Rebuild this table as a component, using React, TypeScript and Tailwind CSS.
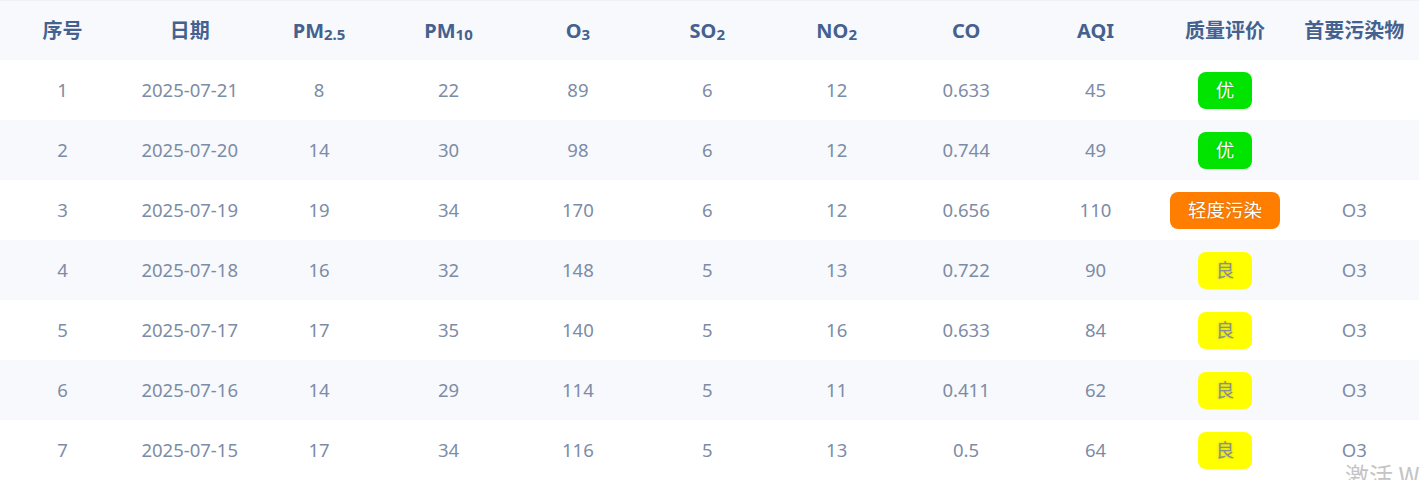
import React from "react";

interface Row {
  date: string;
  pm25: number;
  pm10: number;
  o3: number;
  so2: number;
  no2: number;
  co: string;
  aqi: number;
  level: string;
  main: string;
}

const rows: Row[] = [
  { date: "2025-07-21", pm25: 8, pm10: 22, o3: 89, so2: 6, no2: 12, co: "0.633", aqi: 45, level: "优", main: "" },
  { date: "2025-07-20", pm25: 14, pm10: 30, o3: 98, so2: 6, no2: 12, co: "0.744", aqi: 49, level: "优", main: "" },
  { date: "2025-07-19", pm25: 19, pm10: 34, o3: 170, so2: 6, no2: 12, co: "0.656", aqi: 110, level: "轻度污染", main: "O3" },
  { date: "2025-07-18", pm25: 16, pm10: 32, o3: 148, so2: 5, no2: 13, co: "0.722", aqi: 90, level: "良", main: "O3" },
  { date: "2025-07-17", pm25: 17, pm10: 35, o3: 140, so2: 5, no2: 16, co: "0.633", aqi: 84, level: "良", main: "O3" },
  { date: "2025-07-16", pm25: 14, pm10: 29, o3: 114, so2: 5, no2: 11, co: "0.411", aqi: 62, level: "良", main: "O3" },
  { date: "2025-07-15", pm25: 17, pm10: 34, o3: 116, so2: 5, no2: 13, co: "0.5", aqi: 64, level: "良", main: "O3" },
];

function Level({ level }: { level: string }) {
  if (level === "优")
    return <span className="inline-flex items-center justify-center h-[37px] px-[18px] rounded-lg bg-[#00e400] text-white [text-shadow:0_0_2px_rgba(0,0,0,0.25)]">优</span>;
  if (level === "良")
    return <span className="inline-flex items-center justify-center h-[37px] px-[18px] rounded-lg bg-[#ffff00] text-[#8a8f99] [text-shadow:0_0_3px_rgba(0,0,0,0.2)]">良</span>;
  return <span className="inline-flex items-center justify-center h-[37px] px-[18px] rounded-lg bg-[#ff7e00] text-white [text-shadow:0_0_2px_rgba(0,0,0,0.25)]">{level}</span>;
}

const cell = "flex items-center justify-center";
const sub = "text-[15px] align-[-5px] leading-none";
const cols = "grid grid-cols-[125px_repeat(10,1fr)]";

export default function App() {
  return (
    <div className="relative w-[1421px] h-[480px] overflow-hidden bg-white font-['Noto_Sans','Noto_Sans_CJK_SC',sans-serif]">
      <div className="w-[1419px] border-t border-[#eef1f5]">
        <div className={`${cols} h-[59px] bg-[#f7f9fc] text-[#44618f] text-[20px] font-bold`}>
          <div className={cell}>序号</div>
          <div className={cell}>日期</div>
          <div className={cell}>PM<sub className={sub}>2.5</sub></div>
          <div className={cell}>PM<sub className={sub}>10</sub></div>
          <div className={cell}>O<sub className={sub}>3</sub></div>
          <div className={cell}>SO<sub className={sub}>2</sub></div>
          <div className={cell}>NO<sub className={sub}>2</sub></div>
          <div className={cell}>CO</div>
          <div className={cell}>AQI</div>
          <div className={cell}>质量评价</div>
          <div className={cell}>首要污染物</div>
        </div>
        {rows.map((r, i) => (
          <div
            key={r.date}
            className={`${cols} h-[60px] text-[18.5px] text-[#7d8ca6] ${i % 2 === 1 ? "bg-[#f7f9fc]" : "bg-white"}`}
          >
            <div className={cell}>{i + 1}</div>
            <div className={cell}>{r.date}</div>
            <div className={cell}>{r.pm25}</div>
            <div className={cell}>{r.pm10}</div>
            <div className={cell}>{r.o3}</div>
            <div className={cell}>{r.so2}</div>
            <div className={cell}>{r.no2}</div>
            <div className={cell}>{r.co}</div>
            <div className={cell}>{r.aqi}</div>
            <div className={cell}><Level level={r.level} /></div>
            <div className={cell}>{r.main}</div>
          </div>
        ))}
      </div>
      <div className="absolute left-[1345px] top-[457px] text-[24px] text-[#c4c4c4] whitespace-nowrap font-['Noto_Sans_CJK_SC',sans-serif]">
        激活 Windows
      </div>
    </div>
  );
}
